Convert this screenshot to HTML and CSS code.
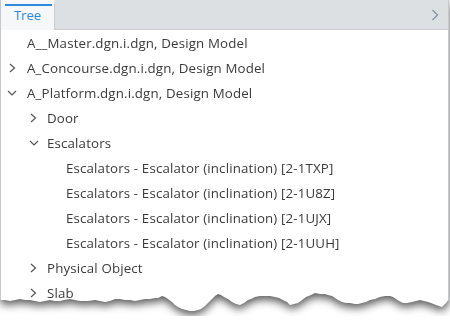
FILE: index.html
```html
<!DOCTYPE html>
<html lang="en">
<head>
    <meta charset="UTF-8">
    <title>Tree</title>
    <link rel="stylesheet" href="styles.css">
</head>
<body>
    <div class="sheet">
        <div class="panel">
            <div class="tabbar">
                <div class="tab">Tree</div>
                <div class="tabbar-fill"></div>
                <svg class="tab-more" width="8" height="12" viewBox="0 0 8 12"><path d="M1.5 1 L6.5 6 L1.5 11" fill="none" stroke="#8794a3" stroke-width="1.3"/></svg>
            </div>
            <ul class="tree">
                <li class="row lvl1"><span class="twisty"></span>A__Master.dgn.i.dgn, Design Model</li>
                <li class="row lvl1"><span class="twisty"><svg width="7" height="10" viewBox="0 0 7 10"><path d="M1 1 L5.5 5 L1 9" fill="none" stroke="#555" stroke-width="1.2"/></svg></span>A_Concourse.dgn.i.dgn, Design Model</li>
                <li class="row lvl1"><span class="twisty"><svg width="10" height="6" viewBox="0 0 10 6"><path d="M1 1 L5 5 L9 1" fill="none" stroke="#555" stroke-width="1.2"/></svg></span>A_Platform.dgn.i.dgn, Design Model</li>
                <li class="row lvl2"><span class="twisty"><svg width="7" height="10" viewBox="0 0 7 10"><path d="M1 1 L5.5 5 L1 9" fill="none" stroke="#555" stroke-width="1.2"/></svg></span>Door</li>
                <li class="row lvl2"><span class="twisty"><svg width="10" height="6" viewBox="0 0 10 6"><path d="M1 1 L5 5 L9 1" fill="none" stroke="#555" stroke-width="1.2"/></svg></span>Escalators</li>
                <li class="row lvl3"><span class="twisty"></span>Escalators - Escalator (inclination) [2-1TXP]</li>
                <li class="row lvl3"><span class="twisty"></span>Escalators - Escalator (inclination) [2-1U8Z]</li>
                <li class="row lvl3"><span class="twisty"></span>Escalators - Escalator (inclination) [2-1UJX]</li>
                <li class="row lvl3"><span class="twisty"></span>Escalators - Escalator (inclination) [2-1UUH]</li>
                <li class="row lvl2"><span class="twisty"><svg width="7" height="10" viewBox="0 0 7 10"><path d="M1 1 L5.5 5 L1 9" fill="none" stroke="#555" stroke-width="1.2"/></svg></span>Physical Object</li>
                <li class="row lvl2"><span class="twisty"><svg width="7" height="10" viewBox="0 0 7 10"><path d="M1 1 L5.5 5 L1 9" fill="none" stroke="#555" stroke-width="1.2"/></svg></span>Slab</li>
            </ul>
        </div>
    </div>
</body>
</html>
```

FILE: styles.css
```css
/* panel with torn bottom edge */
body {
    margin: 0;
    padding: 0;
    background-color: #fff;
    font-family: "Open Sans", "Liberation Sans", sans-serif;
    font-size: 13.3px;
    letter-spacing: 0.15px;
    color: #3b3b3b;
    overflow: hidden;
}
.sheet {
    width: 449px;
    filter: drop-shadow(0 4px 4px rgba(0, 0, 0, 0.65));
}
.panel {
    height: 316px;
    border-left: 1px solid #c6c9cc;
    border-right: 1px solid #c6c9cc;
    background-color: #fff;
    overflow: hidden;
    clip-path: polygon(0 0, 449px 0, 449px 299px, 446px 303px, 442px 307px, 436px 305px, 431px 303px, 428px 302px, 424px 301px, 420px 300px, 416px 301px, 412px 302px, 407px 303px, 403px 303px, 399px 301px, 396px 299px, 393px 297px, 390px 296px, 385px 296px, 380px 297px, 375px 299px, 370px 300px, 366px 302px, 362px 303px, 358px 304px, 355px 304px, 350px 303px, 346px 303px, 342px 302px, 338px 300px, 335px 298px, 332px 296px, 328px 295px, 325px 294px, 320px 294px, 315px 293px, 311px 295px, 306px 297px, 302px 300px, 298px 303px, 294px 304px, 290px 305px, 287px 302px, 283px 300px, 279px 298px, 275px 297px, 270px 296px, 265px 296px, 260px 296px, 255px 297px, 251px 299px, 248px 300px, 244px 303px, 240px 305px, 236px 304px, 232px 302px, 228px 299px, 224px 297px, 221px 295px, 218px 294px, 215px 296px, 212px 299px, 208px 303px, 205px 306px, 201px 309px, 198px 310px, 194px 311px, 190px 311px, 186px 310px, 182px 309px, 178px 307px, 175px 305px, 172px 302px, 168px 299px, 165px 297px, 162px 296px, 158px 298px, 155px 298px, 150px 299px, 145px 299px, 140px 300px, 135px 301px, 130px 300px, 125px 300px, 120px 299px, 115px 299px, 110px 301px, 105px 302px, 100px 301px, 95px 300px, 88px 301px, 80px 301px, 75px 300px, 70px 299px, 64px 300px, 60px 301px, 55px 301px, 50px 300px, 45px 301px, 40px 302px, 35px 301px, 30px 300px, 25px 300px, 20px 299px, 15px 300px, 10px 301px, 5px 300px, 0 300px);
}
.tabbar {
    display: flex;
    align-items: stretch;
    height: 29px;
    background-color: #dde0e3;
    border-bottom: 1px solid #c9ccd0;
}
.tab {
    width: 53px;
    background-color: #f6f7f9;
    border-right: 1px solid #c9ccd0;
    border-top: 4px solid #f6f7f9;
    margin-bottom: -1px;
    color: #2a8be0;
    font-size: 13px;
    letter-spacing: 0;
    line-height: 22px;
    text-align: center;
    position: relative;
}
.tab::before {
    content: "";
    position: absolute;
    left: 4px;
    right: 2px;
    top: 0;
    height: 2px;
    background-color: #2a8be0;
}
.tabbar-fill {
    flex: 1;
}
.tab-more {
    align-self: center;
    margin-right: 9px;
}
.tree {
    list-style: none;
    margin: 0;
    padding: 0;
}
.row {
    display: flex;
    align-items: center;
    height: 25px;
    white-space: nowrap;
}
.twisty {
    width: 20px;
    margin-right: 5px;
    display: flex;
    align-items: center;
    justify-content: center;
}
.lvl1 {
    padding-left: 1px;
}
.lvl2 {
    padding-left: 21px;
}
.lvl2 .twisty {
    padding-left: 3px;
    width: 17px;
}
.lvl3 {
    padding-left: 40px;
}
```
